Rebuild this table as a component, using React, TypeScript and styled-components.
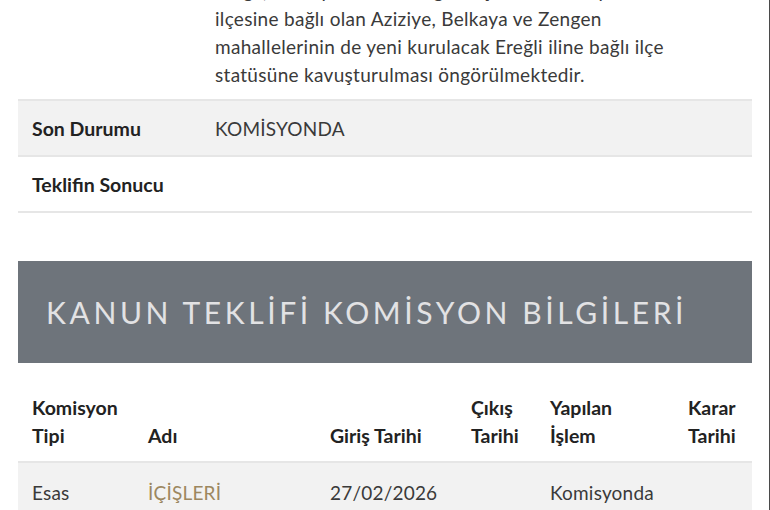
import styled, { createGlobalStyle } from 'styled-components';

const GlobalStyle = createGlobalStyle`
  html, body {
    margin: 0;
    padding: 0;
    background: #fff;
  }

  body {
    font-family: Lato, 'Noto Sans', sans-serif;
    color: #333;
    overflow: hidden;
  }
`;

interface IRow {
  shaded?: boolean;
}

interface ICell {
  accent?: boolean;
}

const detailRows = [
  { label: 'Son Durumu', value: 'KOMİSYONDA', shaded: true },
  { label: 'Teklifin Sonucu', value: '', shaded: false },
];

const columns = [
  ['Komisyon', 'Tipi'],
  ['Adı'],
  ['Giriş Tarihi'],
  ['Çıkış', 'Tarihi'],
  ['Yapılan', 'İşlem'],
  ['Karar', 'Tarihi'],
];

const summaryLines = [
  'Ereğli, Halkapınar ve Emirgazi ilçeleri ile Karapınar',
  'ilçesine bağlı olan Aziziye, Belkaya ve Zengen',
  'mahallelerinin de yeni kurulacak Ereğli iline bağlı ilçe',
  'statüsüne kavuşturulması öngörülmektedir.',
];

const App = () => {
  return (
    <>
      <GlobalStyle />
      <Page>
        <DetailList>
          <DetailRow>
            <Label />
            <Paragraph>
              {summaryLines.map((line) => (
                <span key={line}>{line} </span>
              ))}
            </Paragraph>
          </DetailRow>
          {detailRows.map((row) => (
            <DetailRow key={row.label} shaded={row.shaded}>
              <Label>{row.label}</Label>
              <Value>{row.value}</Value>
            </DetailRow>
          ))}
        </DetailList>

        <SectionTitle>
          <h2>KANUN TEKLİFİ KOMİSYON BİLGİLERİ</h2>
        </SectionTitle>

        <Table>
          <HeadRow>
            {columns.map((lines) => (
              <HeadCell key={lines.join(' ')}>
                {lines.map((line) => (
                  <span key={line}>{line}</span>
                ))}
              </HeadCell>
            ))}
          </HeadRow>
          <BodyRow>
            <Cell>Esas</Cell>
            <Cell accent>İÇİŞLERİ</Cell>
            <Cell>27/02/2026</Cell>
            <Cell />
            <Cell>Komisyonda</Cell>
            <Cell />
          </BodyRow>
        </Table>
      </Page>
    </>
  );
};

const Page = styled.main`
  width: 734px;
  min-height: 545px;
  margin-top: -35px;
  padding: 0 17px 0 18px;
  border-right: 1px solid #4a4a4a;
`;

const DetailList = styled.div`
  display: flex;
  flex-direction: column;
`;

const DetailRow = styled.div<IRow>`
  display: grid;
  grid-template-columns: 183px 1fr;
  align-items: center;
  padding: 0 14px;
  min-height: 54px;
  background-color: ${({ shaded }) => (shaded ? '#f2f2f2' : '#fff')};
  border-bottom: 2px solid #e6e6e6;
`;

const Label = styled.div`
  font-size: 19.5px;
  font-weight: 700;
  color: #222;
`;

const Paragraph = styled.p`
  margin: 0;
  padding: 12px 0 10px;
  font-size: 19px;
  line-height: 28px;
  font-weight: 400;
  letter-spacing: 0.3px;
  color: #3a3a3a;

  span {
    display: block;
  }
`;

const Value = styled.div`
  font-size: 19px;
  letter-spacing: 0.2px;
  color: #3a3a3a;
`;

const SectionTitle = styled.div`
  display: flex;
  align-items: center;
  height: 102px;
  margin-top: 48px;
  padding-left: 28px;
  background-color: #6e747b;

  h2 {
    margin: 0;
    font-size: 30px;
    font-weight: 400;
    letter-spacing: 3.6px;
    color: #e2e2e4;
  }
`;

const Table = styled.div`
  display: flex;
  flex-direction: column;
`;

const HeadRow = styled.div`
  display: grid;
  grid-template-columns: 116px 182px 141px 79px 138px 1fr;
  align-items: end;
  padding: 31px 14px 11px;
  border-bottom: 2px solid #e6e6e6;
`;

const HeadCell = styled.div`
  display: flex;
  flex-direction: column;
  font-size: 19.5px;
  font-weight: 700;
  line-height: 28px;
  color: #222;
`;

const BodyRow = styled(HeadRow)`
  align-items: center;
  padding: 16px 14px;
  background-color: #f2f2f2;
  border-bottom: none;
`;

const Cell = styled.div<ICell>`
  font-size: 19px;
  line-height: 28px;
  letter-spacing: 0.2px;
  color: ${({ accent }) => (accent ? '#9c8760' : '#3a3a3a')};
`;

export default App;
